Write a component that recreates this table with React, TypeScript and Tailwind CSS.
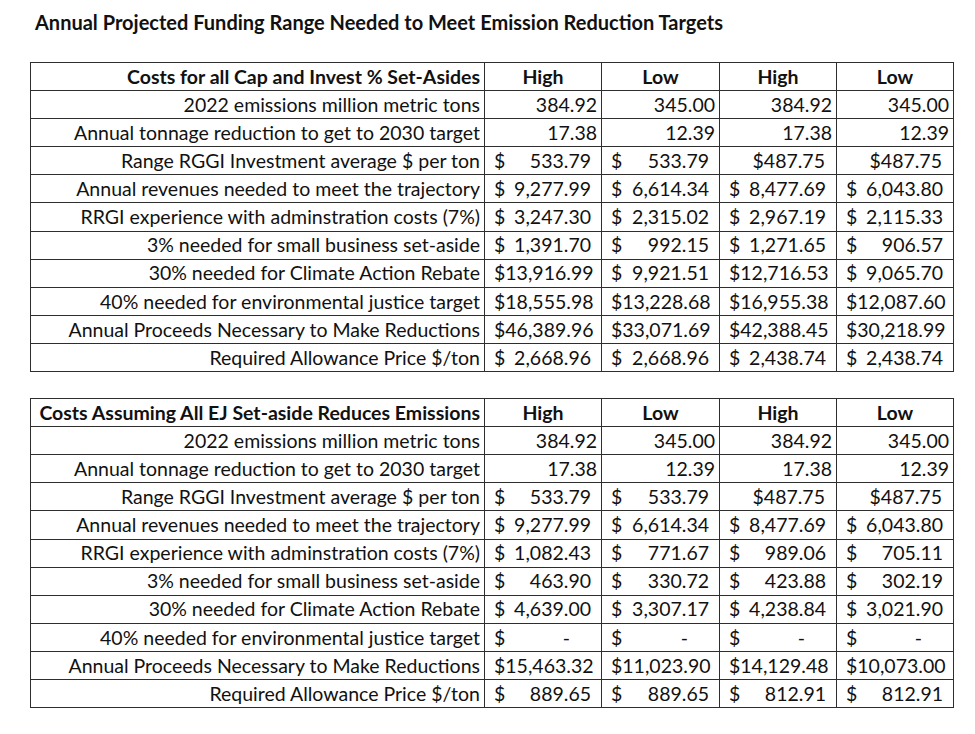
import React from "react";

type Cell =
  | { t: "num"; v: string }
  | { t: "acct"; v: string }
  | { t: "cur"; v: string }
  | { t: "dash" };

interface Row {
  label: string;
  cells: Cell[];
}

interface Section {
  heading: string;
  rows: Row[];
}

const num = (...vals: string[]): Cell[] => vals.map((v) => ({ t: "num", v }));
const acct = (...vals: string[]): Cell[] => vals.map((v) => ({ t: "acct", v }));
const investRow: Cell[] = [
  { t: "acct", v: "533.79" },
  { t: "acct", v: "533.79" },
  { t: "cur", v: "$487.75" },
  { t: "cur", v: "$487.75" },
];

const sections: Section[] = [
  {
    heading: "Costs for all Cap and Invest % Set-Asides",
    rows: [
      { label: "2022 emissions million metric tons", cells: num("384.92", "345.00", "384.92", "345.00") },
      { label: "Annual tonnage reduction to get to 2030 target", cells: num("17.38", "12.39", "17.38", "12.39") },
      { label: "Range RGGI Investment average $ per ton", cells: investRow },
      { label: "Annual revenues needed to meet the trajectory", cells: acct("9,277.99", "6,614.34", "8,477.69", "6,043.80") },
      { label: "RRGI experience with adminstration costs (7%)", cells: acct("3,247.30", "2,315.02", "2,967.19", "2,115.33") },
      { label: "3% needed for small business set-aside", cells: acct("1,391.70", "992.15", "1,271.65", "906.57") },
      { label: "30% needed for Climate Action Rebate", cells: acct("13,916.99", "9,921.51", "12,716.53", "9,065.70") },
      { label: "40% needed for environmental justice target", cells: acct("18,555.98", "13,228.68", "16,955.38", "12,087.60") },
      { label: "Annual Proceeds Necessary to Make Reductions", cells: acct("46,389.96", "33,071.69", "42,388.45", "30,218.99") },
      { label: "Required Allowance Price $/ton", cells: acct("2,668.96", "2,668.96", "2,438.74", "2,438.74") },
    ],
  },
  {
    heading: "Costs Assuming All EJ Set-aside Reduces Emissions",
    rows: [
      { label: "2022 emissions million metric tons", cells: num("384.92", "345.00", "384.92", "345.00") },
      { label: "Annual tonnage reduction to get to 2030 target", cells: num("17.38", "12.39", "17.38", "12.39") },
      { label: "Range RGGI Investment average $ per ton", cells: investRow },
      { label: "Annual revenues needed to meet the trajectory", cells: acct("9,277.99", "6,614.34", "8,477.69", "6,043.80") },
      { label: "RRGI experience with adminstration costs (7%)", cells: acct("1,082.43", "771.67", "989.06", "705.11") },
      { label: "3% needed for small business set-aside", cells: acct("463.90", "330.72", "423.88", "302.19") },
      { label: "30% needed for Climate Action Rebate", cells: acct("4,639.00", "3,307.17", "4,238.84", "3,021.90") },
      { label: "40% needed for environmental justice target", cells: [{ t: "dash" }, { t: "dash" }, { t: "dash" }, { t: "dash" }] },
      { label: "Annual Proceeds Necessary to Make Reductions", cells: acct("15,463.32", "11,023.90", "14,129.48", "10,073.00") },
      { label: "Required Allowance Price $/ton", cells: acct("889.65", "889.65", "812.91", "812.91") },
    ],
  },
];

const headers = ["High", "Low", "High", "Low"];

function ValueCell({ cell }: { cell: Cell }) {
  const base = "border border-[#2e2e2e] h-[28.1px] p-0 align-middle";
  if (cell.t === "num") {
    return <td className={`${base} text-right pr-[4px]`}>{cell.v}</td>;
  }
  if (cell.t === "cur") {
    return <td className={`${base} text-right pr-[11px]`}>{cell.v}</td>;
  }
  if (cell.t === "dash") {
    return (
      <td className={base}>
        <div className="flex justify-between pl-[9px] pr-[31px]">
          <span>$</span>
          <span>-</span>
        </div>
      </td>
    );
  }
  return (
    <td className={base}>
      <div className="flex justify-between pl-[9px] pr-[10px]">
        <span>$</span>
        <span>{cell.v}</span>
      </div>
    </td>
  );
}

function FundingTable({ section }: { section: Section }) {
  return (
    <table className="table-fixed border-collapse w-[923px] text-[19.5px] leading-none text-[#111]">
      <colgroup>
        <col className="w-[454px]" />
        <col className="w-[117px]" />
        <col className="w-[118px]" />
        <col className="w-[117px]" />
        <col className="w-[117px]" />
      </colgroup>
      <thead>
        <tr>
          <th className="border border-[#2e2e2e] h-[28.1px] p-0 pr-[4px] text-right font-bold">
            {section.heading}
          </th>
          {headers.map((h, i) => (
            <th key={i} className="border border-[#2e2e2e] h-[28.1px] p-0 text-center font-bold">
              {h}
            </th>
          ))}
        </tr>
      </thead>
      <tbody>
        {section.rows.map((row) => (
          <tr key={row.label}>
            <td className="border border-[#2e2e2e] h-[28.1px] p-0 pr-[4px] text-right whitespace-nowrap">
              {row.label}
            </td>
            {row.cells.map((c, i) => (
              <ValueCell key={i} cell={c} />
            ))}
          </tr>
        ))}
      </tbody>
    </table>
  );
}

export default function App() {
  return (
    <div className="min-h-screen w-[975px] bg-white font-['Lato',sans-serif]">
      <div className="pt-[11px] pl-[35px] h-[62px]">
        <h1 className="text-[20px] font-bold text-[#111] leading-[22px]">
          Annual Projected Funding Range Needed to Meet Emission Reduction Targets
        </h1>
      </div>
      <div className="pl-[30px] flex flex-col gap-[26px]">
        {sections.map((s) => (
          <FundingTable key={s.heading} section={s} />
        ))}
      </div>
    </div>
  );
}
